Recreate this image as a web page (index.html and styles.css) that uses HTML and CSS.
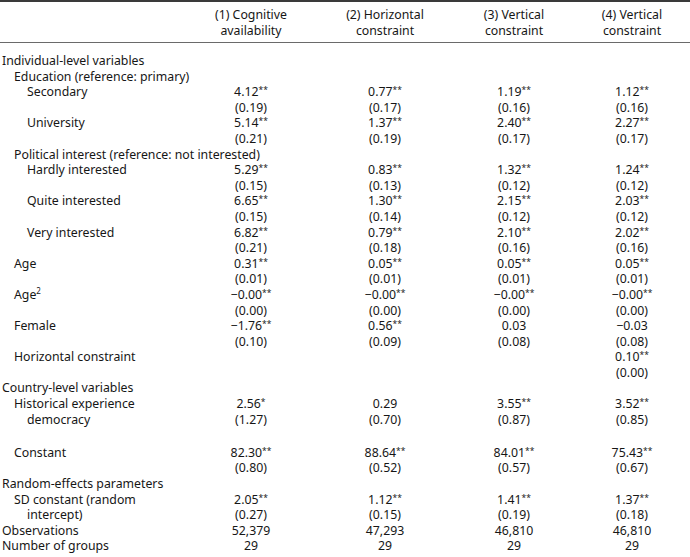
FILE: index.html
```html
<!DOCTYPE html>
<html>
<head>
<meta charset="utf-8">
<link rel="stylesheet" href="styles.css">
</head>
<body>
<table class="reg">
<colgroup>
<col class="c-label"><col class="c1"><col class="c2"><col class="c3"><col class="c4">
</colgroup>
<thead>
<tr>
<th></th>
<th>(1) Cognitive<br>availability</th>
<th>(2) Horizontal<br>constraint</th>
<th>(3) Vertical<br>constraint</th>
<th>(4) Vertical<br>constraint</th>
</tr>
</thead>
<tbody>
<tr class="first"><td class="l0" colspan="5">Individual-level variables</td></tr>
<tr><td class="l1" colspan="5">Education (reference: primary)</td></tr>
<tr><td class="l2">Secondary</td><td>4.12<sup>**</sup></td><td>0.77<sup>**</sup></td><td>1.19<sup>**</sup></td><td>1.12<sup>**</sup></td></tr>
<tr><td></td><td>(0.19)</td><td>(0.17)</td><td>(0.16)</td><td>(0.16)</td></tr>
<tr><td class="l2">University</td><td>5.14<sup>**</sup></td><td>1.37<sup>**</sup></td><td>2.40<sup>**</sup></td><td>2.27<sup>**</sup></td></tr>
<tr><td></td><td>(0.21)</td><td>(0.19)</td><td>(0.17)</td><td>(0.17)</td></tr>
<tr><td class="l1" colspan="5">Political interest (reference: not interested)</td></tr>
<tr><td class="l2">Hardly interested</td><td>5.29<sup>**</sup></td><td>0.83<sup>**</sup></td><td>1.32<sup>**</sup></td><td>1.24<sup>**</sup></td></tr>
<tr><td></td><td>(0.15)</td><td>(0.13)</td><td>(0.12)</td><td>(0.12)</td></tr>
<tr><td class="l2">Quite interested</td><td>6.65<sup>**</sup></td><td>1.30<sup>**</sup></td><td>2.15<sup>**</sup></td><td>2.03<sup>**</sup></td></tr>
<tr><td></td><td>(0.15)</td><td>(0.14)</td><td>(0.12)</td><td>(0.12)</td></tr>
<tr><td class="l2">Very interested</td><td>6.82<sup>**</sup></td><td>0.79<sup>**</sup></td><td>2.10<sup>**</sup></td><td>2.02<sup>**</sup></td></tr>
<tr><td></td><td>(0.21)</td><td>(0.18)</td><td>(0.16)</td><td>(0.16)</td></tr>
<tr><td class="l1">Age</td><td>0.31<sup>**</sup></td><td>0.05<sup>**</sup></td><td>0.05<sup>**</sup></td><td>0.05<sup>**</sup></td></tr>
<tr><td></td><td>(0.01)</td><td>(0.01)</td><td>(0.01)</td><td>(0.01)</td></tr>
<tr><td class="l1">Age<sup class="sq">2</sup></td><td>−0.00<sup>**</sup></td><td>−0.00<sup>**</sup></td><td>−0.00<sup>**</sup></td><td>−0.00<sup>**</sup></td></tr>
<tr><td></td><td>(0.00)</td><td>(0.00)</td><td>(0.00)</td><td>(0.00)</td></tr>
<tr><td class="l1">Female</td><td>−1.76<sup>**</sup></td><td>0.56<sup>**</sup></td><td>0.03</td><td>−0.03</td></tr>
<tr><td></td><td>(0.10)</td><td>(0.09)</td><td>(0.08)</td><td>(0.08)</td></tr>
<tr><td class="l1">Horizontal constraint</td><td></td><td></td><td></td><td>0.10<sup>**</sup></td></tr>
<tr><td></td><td></td><td></td><td></td><td>(0.00)</td></tr>
<tr><td class="l0" colspan="5">Country-level variables</td></tr>
<tr><td class="l1 hang" rowspan="2">Historical experience democracy</td><td>2.56<sup>*</sup></td><td>0.29</td><td>3.55<sup>**</sup></td><td>3.52<sup>**</sup></td></tr>
<tr><td>(1.27)</td><td>(0.70)</td><td>(0.87)</td><td>(0.85)</td></tr>
<tr class="spacer"><td colspan="5">&nbsp;</td></tr>
<tr><td class="l1">Constant</td><td>82.30<sup>**</sup></td><td>88.64<sup>**</sup></td><td>84.01<sup>**</sup></td><td>75.43<sup>**</sup></td></tr>
<tr><td></td><td>(0.80)</td><td>(0.52)</td><td>(0.57)</td><td>(0.67)</td></tr>
<tr><td class="l0" colspan="5">Random-effects parameters</td></tr>
<tr><td class="l1 hang" rowspan="2">SD constant (random intercept)</td><td>2.05<sup>**</sup></td><td>1.12<sup>**</sup></td><td>1.41<sup>**</sup></td><td>1.37<sup>**</sup></td></tr>
<tr><td>(0.27)</td><td>(0.15)</td><td>(0.19)</td><td>(0.18)</td></tr>
<tr><td class="l0">Observations</td><td>52,379</td><td>47,293</td><td>46,810</td><td>46,810</td></tr>
<tr class="last"><td class="l0">Number of groups</td><td>29</td><td>29</td><td>29</td><td>29</td></tr>
</tbody>
</table>
</body>
</html>
```

FILE: styles.css
```css
html, body {
  margin: 0;
  padding: 0;
  background: #ffffff;
}

body {
  font-family: "Noto Sans", "Open Sans", sans-serif;
  font-size: 12.3px;
  color: #161616;
}

.reg {
  width: 690px;
  border-collapse: collapse;
  table-layout: fixed;
  border-top: 2px solid #3a3a3a;
  border-bottom: 2px solid #3a3a3a;
}

.c-label { width: 186px; }
.c1 { width: 130px; }
.c2 { width: 138px; }
.c3 { width: 120px; }
.c4 { width: 116px; }

.reg th {
  font-weight: normal;
  line-height: 15.5px;
  padding: 5px 0 4px;
  text-align: center;
  border-bottom: 1px solid #6a6a6a;
}

.reg td {
  padding: 0;
  line-height: 15.6px;
  text-align: center;
  white-space: nowrap;
  vertical-align: top;
}

.reg td.l0,
.reg td.l1,
.reg td.l2 {
  text-align: left;
}

.reg td.l0 { padding-left: 2px; }
.reg td.l1 { padding-left: 14px; }
.reg td.l2 { padding-left: 27px; }

.reg td.hang {
  white-space: normal;
  padding-left: 27px;
  text-indent: -13px;
}

.reg tr.first td { padding-top: 10px; }
.reg tr.spacer td { padding-bottom: 2px; }
.reg tr.last td { padding-bottom: 3px; }

sup {
  font-size: 8.5px;
  line-height: 0;
  vertical-align: 3px;
}

sup.sq {
  font-size: 8px;
  vertical-align: 5px;
}
```
